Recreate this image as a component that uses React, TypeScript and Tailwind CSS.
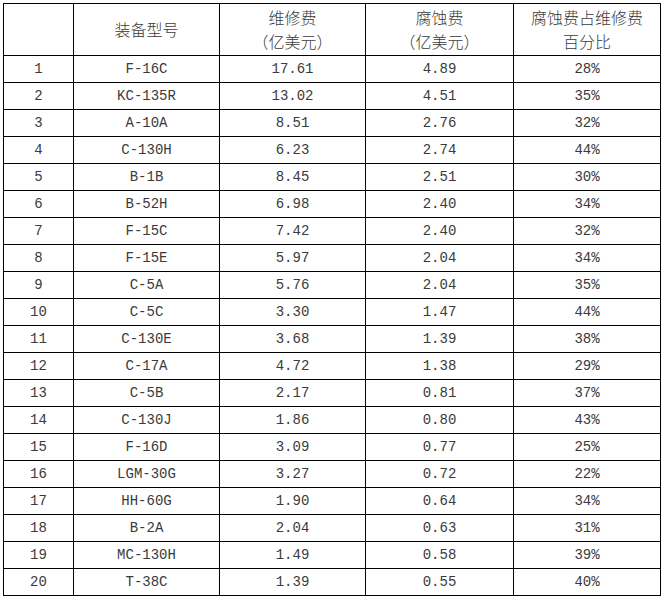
import React from 'react'

const rows: [string, string, string, string, string][] = [
  ['1', 'F-16C', '17.61', '4.89', '28%'],
  ['2', 'KC-135R', '13.02', '4.51', '35%'],
  ['3', 'A-10A', '8.51', '2.76', '32%'],
  ['4', 'C-130H', '6.23', '2.74', '44%'],
  ['5', 'B-1B', '8.45', '2.51', '30%'],
  ['6', 'B-52H', '6.98', '2.40', '34%'],
  ['7', 'F-15C', '7.42', '2.40', '32%'],
  ['8', 'F-15E', '5.97', '2.04', '34%'],
  ['9', 'C-5A', '5.76', '2.04', '35%'],
  ['10', 'C-5C', '3.30', '1.47', '44%'],
  ['11', 'C-130E', '3.68', '1.39', '38%'],
  ['12', 'C-17A', '4.72', '1.38', '29%'],
  ['13', 'C-5B', '2.17', '0.81', '37%'],
  ['14', 'C-130J', '1.86', '0.80', '43%'],
  ['15', 'F-16D', '3.09', '0.77', '25%'],
  ['16', 'LGM-30G', '3.27', '0.72', '22%'],
  ['17', 'HH-60G', '1.90', '0.64', '34%'],
  ['18', 'B-2A', '2.04', '0.63', '31%'],
  ['19', 'MC-130H', '1.49', '0.58', '39%'],
  ['20', 'T-38C', '1.39', '0.55', '40%'],
]

export default function App() {
  return (
    <div className="w-[663px] h-[598px] bg-white pt-[3px] pl-[3px]">
      <table className="table-fixed border-collapse w-[658px] text-[#3a3a3a] font-['Liberation_Mono','Noto_Sans_CJK_SC',monospace] text-[14px]">
        <colgroup>
          <col className="w-[70px]" />
          <col className="w-[146px]" />
          <col className="w-[146px]" />
          <col className="w-[148px]" />
          <col className="w-[147px]" />
        </colgroup>
        <thead>
          <tr className="h-[52px] font-['Noto_Sans_CJK_SC',sans-serif] text-[16px] leading-[24px]">
            <th className="border border-black p-0 font-light"></th>
            <th className="border border-black p-0 pb-[2px] font-light">装备型号</th>
            <th className="border border-black p-0 pb-[2px] font-light">
              维修费<br />（亿美元）
            </th>
            <th className="border border-black p-0 pb-[2px] font-light">
              腐蚀费<br />（亿美元）
            </th>
            <th className="border border-black p-0 pb-[2px] font-light">
              腐蚀费占维修费<br />百分比
            </th>
          </tr>
        </thead>
        <tbody>
          {rows.map((r) => (
            <tr key={r[0]} className="h-[27px]">
              {r.map((c, i) => (
                <td key={i} className="border border-black p-0 text-center leading-none">
                  {c}
                </td>
              ))}
            </tr>
          ))}
        </tbody>
      </table>
    </div>
  )
}
